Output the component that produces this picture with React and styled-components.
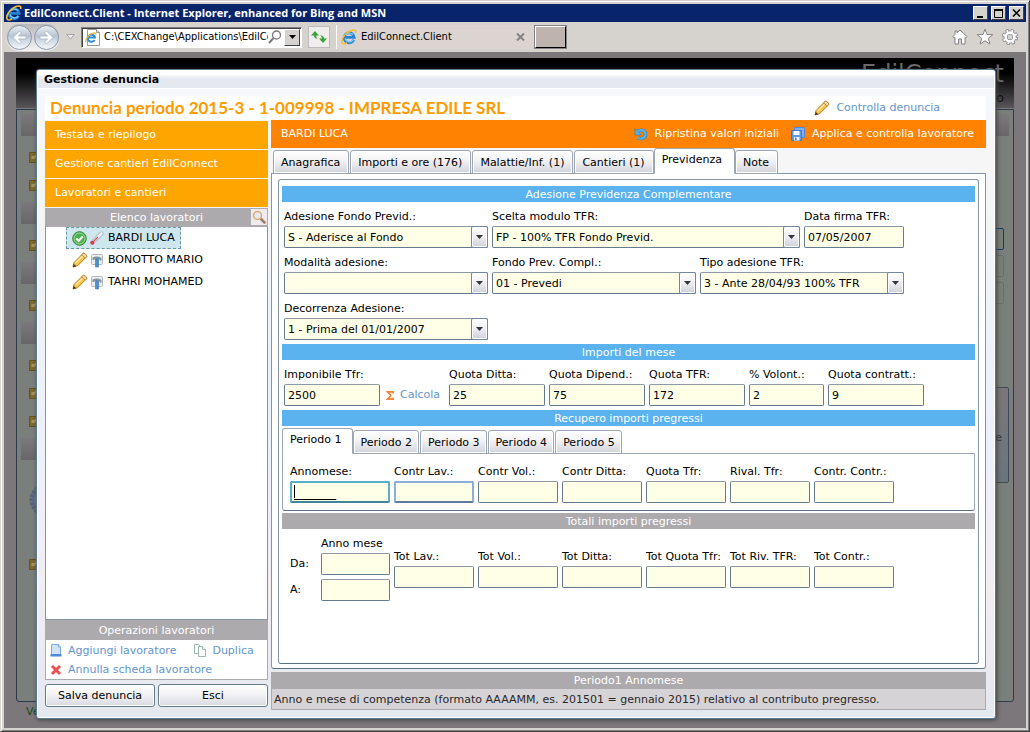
import React, { useState } from 'react';
import styled, { createGlobalStyle, css } from 'styled-components';

const GlobalStyle = createGlobalStyle`
    * {
        box-sizing: border-box;
    }
    body {
        margin: 0;
        font: 11px/16px 'DejaVu Sans', Verdana, sans-serif;
        color: #000;
    }
    button, input, select {
        font: inherit;
        color: inherit;
        margin: 0;
    }
    a {
        color: inherit;
        text-decoration: none;
    }
    svg {
        display: block;
        flex: none;
    }
`;

/* ---------- browser window ---------- */

const Window = styled.div`
    display: flex;
    flex-direction: column;
    min-height: 100vh;
    background: #d6d3ce;
    padding: 3px;
    border: 1px solid #d6d3ce;
    border-right-color: #424142;
    border-bottom-color: #424142;
    box-shadow: inset 1px 1px #fff, inset -1px -1px #848284;
`;

const TitleBar = styled.header`
    display: flex;
    align-items: center;
    gap: 2px;
    height: 18px;
    padding: 0 2px;
    background: #08246b;
    color: #fff;
    font: bold 11px/16px 'Open Sans', Tahoma, sans-serif;
`;

const WindowTitle = styled.span`
    flex: 1;
    white-space: nowrap;
`;

const CaptionButton = styled.button`
    display: grid;
    place-items: center;
    width: 15px;
    height: 14px;
    padding: 0;
    background: #d6d3ce;
    border: 1px solid;
    border-color: #fff #424142 #424142 #fff;
    & + & {
        margin-left: ${({ $apart }) => ($apart ? '1px' : '-1px')};
    }
`;

const NavBar = styled.nav`
    display: flex;
    align-items: center;
    height: 30px;
    padding: 0 7px 0 2px;
    gap: 6px;
    font: 11px/16px 'DejaVu Sans Condensed', Tahoma, sans-serif;
`;

const NavButton = styled.button`
    display: grid;
    place-items: center;
    padding: 0;
    border: 0;
    background: none;
`;

const BackForward = styled.div`
    display: flex;
    gap: 2px;
    padding: 1px;
    border-radius: 14px;
    background: linear-gradient(#b8b8b8, #f4f4f4);
`;

const RoundButton = styled(NavButton)`
    width: 25px;
    height: 25px;
    border-radius: 50%;
    border: 1px solid #8c96a5;
    background: linear-gradient(#e8edf2, #b8c4d2 45%, #ccd6e2 60%, #f4f8fc);
`;

const AddressBox = styled.div`
    display: flex;
    align-items: center;
    width: 221px;
    height: 21px;
    padding: 0 1px 0 3px;
    background: #fff;
    border: 1px solid;
    border-color: #848284 #fff #fff #848284;
    box-shadow: inset 1px 1px #424142;
`;

const AddressInput = styled.input`
    flex: 1;
    min-width: 0;
    padding: 0 0 0 3px;
    border: 0;
    outline: 0;
    background: none;
`;

const DropButton = styled(NavButton)`
    width: 16px;
    height: 17px;
    margin-left: 2px;
    background: #d6d3ce;
    border: 1px solid;
    border-color: #fff #424142 #424142 #fff;
`;

const RefreshButton = styled(NavButton)`
    width: 22px;
    height: 22px;
    border: 1px solid #bdbabd;
    background: #f0eeec;
`;

const BrowserTab = styled.div`
    display: flex;
    align-items: center;
    gap: 4px;
    width: 198px;
    height: 24px;
    padding: 0 9px 0 4px;
    border-left: 1px solid #fff;
    background: #dbd4d1;
    & > span {
        flex: 1;
    }
`;

const NewTab = styled.button`
    width: 31px;
    height: 22px;
    margin-left: -5px;
    background: #bdb4b0;
    border: 1px solid;
    border-color: #fff #000 #000 #fff;
    outline: 1px solid #848284;
`;

const NavIcons = styled.div`
    display: flex;
    gap: 7px;
    margin-left: auto;
`;

/* ---------- dimmed page behind the dialog ---------- */

const Stage = styled.main`
    flex: 1;
    display: grid;
    background: #7b777b;
    & > * {
        grid-area: 1 / 1;
    }
`;

const BackPage = styled.div`
    display: flex;
    flex-direction: column;
    padding: 6px 12px 0;
    color: #101010;
`;

const BackHeader = styled.div`
    height: 50px;
    padding-right: 10px;
    text-align: right;
    background: linear-gradient(#000 30%, #585658);
    font: 24px/32px 'DejaVu Sans', Verdana, sans-serif;
    color: #6b696b;
    & small {
        display: block;
        font-size: 13px;
        line-height: 16px;
        color: #101010;
    }
`;

const BackBody = styled.div`
    flex: 1;
    display: flex;
    justify-content: space-between;
    margin-top: 1px;
    padding: 4px;
    border: 1px solid #2c3b47;
    border-radius: 0 0 3px 3px;
    background: #7b7f7b;
`;

const BackRail = styled.div`
    width: 40px;
`;

const BackBand = styled.div`
    height: 22px;
    background: linear-gradient(#7b797b, #686668);
`;

const BackGroup = styled.div`
    padding: 7px 0 3px 8px;
`;

const BackItem = styled.div`
    display: flex;
    align-items: center;
    height: 28px;
`;

const BackSide = styled.div`
    display: flex;
    flex-direction: column;
    align-items: flex-end;
    width: 40px;
`;

const BackSpace = styled.div`
    height: 92px;
`;

const BackField = styled.div`
    width: 30px;
    height: 22px;
    margin: 0 5px 5px 0;
    border: 1px solid ${({ $focus }) => ($focus ? '#103c6b' : '#6a6d6a')};
    border-radius: 2px;
`;

const BackBox = styled.div`
    width: 30px;
    height: 96px;
    margin-top: 78px;
    padding: 42px 6px 0 0;
    text-align: right;
    color: #30383c;
    border: 1px solid #404c54;
    border-radius: 2px;
    background: linear-gradient(#7b777b, #6a757c);
`;

const BackFooter = styled.div`
    height: 26px;
    padding: 2px 10px;
    color: #184a20;
`;

/* ---------- dialog ---------- */

const Dialog = styled.section`
    display: flex;
    flex-direction: column;
    margin: 17px 30px 9px 32px;
    padding: 0 9px 8px 8px;
    border: 1px solid #5a7b8c;
    border-radius: 3px;
    box-shadow: inset 0 0 0 1px #fff, 1px 1px 4px #404040;
    background: linear-gradient(#f6f8fe, #f6f6f6 12%, #eef2f8 45%, #eef0fa 60%, #f2eef2 80%, #e4e8ef);
`;

const DialogTitle = styled.h1`
    margin: 1px -8px 7px -7px;
    padding: 0 6px;
    height: 18px;
    font-size: 11px;
    line-height: 17px;
    background: linear-gradient(#fff 0 20%, #f2f2f4 30%, #e6e8f0 50%);
    border-bottom: 1px solid #fff;
`;

const DialogHead = styled.div`
    display: flex;
    align-items: center;
    justify-content: space-between;
    height: 24px;
    padding: 0 46px 0 5px;
    background: #fff;
`;

const Heading = styled.h2`
    margin: 0;
    font: bold 17px/24px Lato, 'Century Gothic', sans-serif;
    color: #ff9a00;
`;

const ActionLink = styled.a`
    display: flex;
    align-items: center;
    gap: ${({ $light }) => ($light ? 7 : 6)}px;
    color: ${({ $light }) => ($light ? '#fff' : '#6396ce')};
    white-space: nowrap;
`;

const Columns = styled.div`
    flex: 1;
    display: grid;
    grid-template-columns: 223px minmax(0, 1fr);
    gap: 3px;
`;

const Sidebar = styled.aside`
    display: flex;
    flex-direction: column;
    padding-bottom: 3px;
`;

const MenuLink = styled.a`
    padding: 6px 10px;
    height: 28px;
    background: #ffa500;
    color: #fff;
    margin-top: 1px;
`;

const Bar = styled.h3`
    margin: 0;
    padding-top: 1px;
    height: ${({ $height }) => $height || 16}px;
    line-height: ${({ $height }) => ($height || 16) - 1}px;
    font-size: 11px;
    font-weight: normal;
    text-align: center;
    color: #fff;
    background: ${({ $blue }) => ($blue ? '#5ab2ef' : '#adaaad')};
`;

const ListHead = styled.div`
    display: grid;
    margin-top: 1px;
    & > * {
        grid-area: 1 / 1;
    }
`;

const SearchButton = styled.button`
    display: grid;
    place-items: center;
    justify-self: end;
    align-self: center;
    width: 16px;
    height: 16px;
    margin-right: 1px;
    padding: 0;
    border: 0;
    background: #efebef;
`;

const WorkerList = styled.ul`
    flex: 1;
    margin: 0;
    padding: 0 20px;
    list-style: none;
    background: #fff;
    border: 1px solid #8496a5;
    border-top-color: #adaaad;
`;

const Worker = styled.li`
    display: flex;
    align-items: center;
    gap: 2px;
    width: max-content;
    height: 22px;
    padding: 0 5px;
    border: 1px dashed transparent;
    white-space: nowrap;
    & > span {
        margin-left: 2px;
    }
    ${({ $selected }) =>
        $selected &&
        css`
            background: #cee7ef;
            border-color: #6b96a5;
        `}
`;

const Operations = styled.div`
    display: flex;
    flex-wrap: wrap;
    column-gap: 18px;
    padding: 1px 4px 0;
    background: #fff;
    border: 1px solid #adaaad;
    border-top: 0;
    & > a {
        height: 19px;
    }
`;

const Buttons = styled.div`
    display: grid;
    grid-template-columns: 1fr 1fr;
    gap: 3px;
    margin-top: 4px;
`;

const PushButton = styled.button`
    height: 23px;
    padding: 1px 0 0;
    border: 1px solid #637b8c;
    border-radius: 3px;
    box-shadow: inset 0 0 0 1px #fff;
    background: linear-gradient(#fff, #f4f4f6 40%, #d8dae2);
`;

/* ---------- worker card ---------- */

const Card = styled.div`
    display: flex;
    flex-direction: column;
    min-width: 0;
`;

const WorkerBar = styled.div`
    display: flex;
    align-items: center;
    gap: 12px;
    height: 28px;
    padding: 0 12px 0 10px;
    background: #ff8200;
    color: #fff;
    & > span {
        flex: 1;
    }
`;

const Tabs = styled.div`
    display: flex;
    align-items: flex-end;
    gap: 1px;
    height: 26px;
    margin-top: ${({ $inset }) => ($inset ? 0 : 2)}px;
    padding-left: ${({ $inset }) => $inset || 0}px;
    position: relative;
`;

const Tab = styled.button`
    height: 24px;
    padding: 1px ${({ $wide }) => ($wide ? 8 : 6)}px 0 7px;
    border: 1px solid #9ca6b5;
    border-radius: 3px 3px 0 0;
    box-shadow: inset 0 0 0 1px #fff;
    background: linear-gradient(#fff, #f4f4f6 40%, #d2d4dc);
    white-space: nowrap;
    ${({ $active, $wide }) =>
        $active &&
        css`
            height: 26px;
            margin: 0 -1px;
            padding: 0 ${$wide ? 12 : 10}px 2px 7px;
            border-bottom-color: #fff;
            box-shadow: none;
            background: #fff;
            &:first-child {
                margin-left: 0;
            }
        `}
`;

const TabPanel = styled.div`
    flex: 1;
    margin-top: -1px;
    padding: 5px 6px 4px;
    display: flex;
    border: 1px solid #8496a5;
    border-bottom-color: #5a7184;
    border-radius: 0 0 3px 3px;
    background: #fff;
`;

const FormFrame = styled.form`
    flex: 1;
    min-width: 0;
    padding: 6px 3px;
    border: 1px solid #8496a5;
    border-bottom-color: #5a7184;
    border-radius: 3px;
`;

const FormRow = styled.div`
    display: flex;
    align-items: ${({ $align }) => $align || 'flex-end'};
    gap: 4px;
    padding: ${({ $inset }) => ($inset ? '6px 8px 0' : '6px 2px 0')};
`;

const FormBlock = styled.div`
    padding-bottom: 4px;
`;

const Period = styled.div`
    margin: -1px 0 2px;
    padding: 3px 0 7px;
    border: 1px solid #9ca6b5;
    border-bottom-color: #5a7184;
    border-radius: 0 0 3px 3px;
`;

const PeriodRow = styled(FormRow)`
    padding: 6px 7px 0;
`;

const Field = styled.div`
    display: flex;
    flex-direction: column;
    gap: 1px;
    width: ${({ $width }) => $width}px;
    white-space: nowrap;
    & > label {
        padding-top: 1px;
    }
`;

const boxStyle = css`
    width: 100%;
    height: 22px;
    padding: 1px 3px 0;
    border: 1px solid #637b8c;
    border-top-color: #8c9aa5;
    border-radius: 2px;
    outline: 0;
    background-color: #ffffe7;
`;

const TextBox = styled.input`
    ${boxStyle}
    ${({ $tone }) =>
        $tone &&
        css`
            border: 2px solid ${$tone === 'focus' ? '#5aaec6' : '#8caede'};
            border-bottom-color: ${$tone === 'focus' ? '#42869c' : '#637b9c'};
            padding: 0 2px;
        `}
`;

const MaskBox = styled(TextBox)`
    font-size: 14px;
    line-height: 16px;
    background-image: linear-gradient(#000, #000);
    background-size: 1px 13px;
    background-repeat: no-repeat;
    background-position: 2px 2px;
`;

const SelectBox = styled.div`
    display: grid;
    & > * {
        grid-area: 1 / 1;
    }
`;

const Select = styled.select`
    ${boxStyle}
    appearance: none;
    padding-right: 18px;
`;

const SelectArrow = styled.span`
    display: grid;
    place-items: center;
    justify-self: end;
    width: 17px;
    height: 22px;
    border: 1px solid #73869c;
    border-radius: 2px;
    box-shadow: inset 0 0 0 1px #fff;
    background: linear-gradient(#fff, #f0f0f4 45%, #ced0da);
    pointer-events: none;
`;

const Calc = styled.div`
    display: flex;
    align-items: center;
    width: 61px;
    height: 22px;
    padding-left: 2px;
`;

const Range = styled.div`
    display: grid;
    grid-template-columns: 27px 69px;
    gap: 4px;
    align-items: center;
    width: 100px;
    & > span {
        grid-column: 2;
        padding-top: 1px;
        margin-bottom: -3px;
        white-space: nowrap;
    }
`;

const Help = styled.div`
    margin-top: 3px;
`;

const HelpText = styled.p`
    margin: 0;
    height: 21px;
    padding: 1px 2px;
    line-height: 19px;
    color: #292829;
    background: #d6d3d6;
    border: 1px solid #adaaad;
    border-top: 0;
    white-space: nowrap;
    overflow: hidden;
`;

/* ---------- icons ---------- */

const IeIcon = ({ size = 16 }) => (
    <svg width={size} height={size} viewBox="0 0 16 16" fill="none">
        <path d="M12.8 10.800A5 5 0 1 1 13.200 8.300H4.500" stroke="#2483d6" strokeWidth="2.800" />
        <path d="M12.200 11A4.700 4.700 0 0 1 4 9.500M4.500 6A5 5 0 0 1 12 5.500" stroke="#7cccf8" strokeWidth="1.300" />
        <path d="M1.500 14.500C-1 11 4 4 10 1.600c3.500-1.300 5.500-.4 4.600 2.400M1.500 14.500c1 .9 3 .3 4.500-.8" stroke="#f9be30" strokeWidth="1.600" />
    </svg>
);

const PageIeIcon = () => (
    <svg width="16" height="17" viewBox="0 0 16 17">
        <path d="M2.500.5h9l3 3v13h-12z" fill="#fff" stroke="#9a9a9a" />
        <path d="M11.500.5v3h3" fill="#ddd" stroke="#9a9a9a" />
        <path d="M9.600 11A3.600 3.600 0 1 1 10 8.600H3.600" fill="none" stroke="#2a8fe0" strokeWidth="2" />
        <path d="M1 13.400C-.4 11 3 6.400 7.600 4.400c2-.9 3.800-.6 3 1.200" fill="none" stroke="#f2b32c" strokeWidth="1.200" />
    </svg>
);

const ArrowIcon = ({ flip }) => (
    <svg width="17" height="17" viewBox="0 0 17 17">
        <path
            d={flip ? 'M8.500 2l6.500 6.500L8.500 15l-2-2 3-3H2V7h7.500l-3-3z' : 'M8.500 2L2 8.500 8.500 15l2-2-3-3H15V7H7.500l3-3z'}
            fill="#fff"
            stroke="#a4b0c0"
            strokeWidth=".8"
            strokeLinejoin="round"
        />
    </svg>
);

const Triangle = ({ width = 7, fill = '#313439' }) => (
    <svg width={width} height="4" viewBox="0 0 7 4">
        <path d="M0 0h7L3.500 4z" fill={fill} />
    </svg>
);

const HistoryIcon = () => (
    <svg width="9" height="6" viewBox="0 0 9 6">
        <path d="M.8.500h7.400L4.500 5.200z" fill="#eee" stroke="#a5a2a5" />
    </svg>
);

const LensIcon = () => (
    <svg width="14" height="14" viewBox="0 0 14 14" fill="none">
        <circle cx="8.500" cy="5" r="4" stroke="#7b797b" strokeWidth="1.300" />
        <path d="M5.500 8L1 13" stroke="#7b797b" strokeWidth="2" />
    </svg>
);

const RefreshIcon = () => (
    <svg width="16" height="16" viewBox="0 0 16 16" fill="#39a239">
        <path d="M0 6.500L4 2l4 4.500H5.200c0 1.800.6 2.500 1.800 3.300C4.500 9.800 3 8.500 2.800 6.500z" />
        <path d="M16 9.500L12 14 8 9.500h2.800c0-1.800-.6-2.500-1.800-3.300 2.500 0 4 1.300 4.200 3.300z" />
    </svg>
);

const HomeIcon = () => (
    <svg width="18" height="18" viewBox="0 0 18 18">
        <path d="M9 2l7 6.500-1.200 1.500L14 9.500V16h-3.500v-5h-3v5H4V9.500L3.200 10 2 8.500 4 6.500V3h2v1.700z" fill="#fff" stroke="#848284" strokeLinejoin="round" />
    </svg>
);

const StarIcon = () => (
    <svg width="18" height="18" viewBox="0 0 18 18">
        <path d="M9 1.200l2 5.300 5.800.2-4.500 3.600 1.600 5.700L9 12.800 4.100 16l1.600-5.700L1.200 6.700 7 6.500z" fill="#fff" stroke="#848284" strokeLinejoin="round" />
    </svg>
);

const GearIcon = () => (
    <svg width="18" height="18" viewBox="0 0 18 18" fill="none">
        <circle cx="9" cy="9" r="6.300" stroke="#848284" strokeWidth="3.600" strokeDasharray="2.900 2.050" />
        <circle cx="9" cy="9" r="4.500" stroke="#848284" strokeWidth="4" />
        <circle cx="9" cy="9" r="6.300" stroke="#fff" strokeWidth="2.200" strokeDasharray="1.700 3.250" strokeDashoffset="-.6" />
        <circle cx="9" cy="9" r="4.400" stroke="#fff" strokeWidth="2.600" />
        <circle cx="9" cy="9" r="2" fill="#d6d3ce" />
    </svg>
);

const CloseIcon = () => (
    <svg width="9" height="8" viewBox="0 0 9 8" stroke="#848284" strokeWidth="2">
        <path d="M1 .5l7 7M8 .5l-7 7" />
    </svg>
);

const PencilIcon = ({ size = 16 }) => (
    <svg width={size} height={size} viewBox="0 0 16 16" strokeLinejoin="round">
        <path d="M1 15l1-4.500L11 1.500c1-1 4.500 2 3.500 3.300L5.500 13.800z" fill="#f7c34a" stroke="#b5791c" />
        <path d="M3.500 11L12 2.800" stroke="#ffeaa0" strokeWidth="1.600" />
        <path d="M11 1.500c1-1 4.500 2 3.500 3.300l-1.300 1.400-3.600-3.300z" fill="#f5d9b4" stroke="#b5791c" strokeWidth=".8" />
        <path d="M1 15l.7-3 2.500 2.300z" fill="#3a2a18" />
    </svg>
);

const UndoIcon = () => (
    <svg width="14" height="14" viewBox="0 0 14 14">
        <path d="M3.500 4.500C6 2.200 11.500 2.800 11.500 7.500c0 3.500-4 5-7.500 3.500" fill="none" stroke="#2f7cb4" strokeWidth="3.400" />
        <path d="M3.500 4.500C6 2.200 11.500 2.800 11.500 7.500c0 3.500-4 5-7.500 3.500" fill="none" stroke="#5ab4ee" strokeWidth="2.200" />
        <path d="M1 1.500V8h6.500z" fill="#5ab4ee" stroke="#2f7cb4" strokeWidth=".7" />
    </svg>
);

const SaveIcon = () => (
    <svg width="14" height="14" viewBox="0 0 14 14">
        <path d="M3.500.5h10v10h-3v-7h-7z" fill="#7cb0f4" stroke="#5586d4" />
        <path d="M.5 3.500h10v10H.5z" fill="#5c98ec" stroke="#4478cc" />
        <path d="M2.500 4h6v4h-6z" fill="#fff" />
        <path d="M3 10h5.500v3.500H3z" fill="#eef4fc" />
        <path d="M4 10.500h1.500V13H4z" fill="#4478cc" />
    </svg>
);

const SearchIcon = () => (
    <svg width="14" height="14" viewBox="0 0 14 14">
        <path d="M9 9l3.500 3.500" stroke="#a08068" strokeWidth="2.600" strokeLinecap="round" />
        <circle cx="5.500" cy="5.500" r="4" fill="#e6e9f4" stroke="#dbab70" strokeWidth="1.500" />
    </svg>
);

const CheckIcon = () => (
    <svg width="15" height="15" viewBox="0 0 15 15">
        <circle cx="7.500" cy="7.500" r="6.800" fill="#4caf50" stroke="#2c8636" />
        <circle cx="7.500" cy="7.500" r="5.500" fill="none" stroke="#a8dca8" />
        <path d="M4.300 7.500l2.400 2.500 4-4.500" fill="none" stroke="#fff" strokeWidth="2" />
    </svg>
);

const ThermometerIcon = () => (
    <svg width="15" height="15" viewBox="0 0 15 15" strokeLinecap="round">
        <path d="M3.500 11.500L12.500 2.500" stroke="#9eaab8" strokeWidth="4" />
        <path d="M3.500 11.500L12.500 2.500" stroke="#f0f4f8" strokeWidth="2.600" />
        <path d="M3.500 11.500L8.500 6.500" stroke="#e0485c" strokeWidth="1.300" />
        <circle cx="3.300" cy="11.700" r="2" fill="#dc3c50" />
    </svg>
);

const HammerIcon = () => (
    <svg width="14" height="15" viewBox="0 0 14 15">
        <rect x="1.500" y="1.500" width="11" height="10" rx="1" fill="#eceef0" stroke="#b4b8bc" />
        <path d="M2.500 4.500C5 3 9 3 11.500 5v2.500H10L9 6H5L4 7H2.500z" fill="#8494a4" />
        <path d="M5.500 6h3v8h-3z" fill="#4a90d4" stroke="#3a74b4" strokeWidth=".6" />
    </svg>
);

const NewPageIcon = () => (
    <svg width="12" height="13" viewBox="0 0 12 13">
        <path d="M1.500.5h7L10.500 3v8.500h-9z" fill="#cfe3fa" stroke="#7aa8e0" />
        <path d="M8.500.5V3h2" fill="#fff" stroke="#7aa8e0" />
        <path d="M.5 10h11v2.500H.5z" fill="#4a8ad8" />
    </svg>
);

const CopyIcon = () => (
    <svg width="12" height="13" viewBox="0 0 12 13" fill="#fff" stroke="#9cb8ae">
        <path d="M.5.500h4L6.500 2.500v7h-6z" />
        <path d="M4.500 2.500h4L11.500 5.500v7h-7z" />
        <path d="M8.500 2.500v3h3" />
    </svg>
);

const DeleteIcon = () => (
    <svg width="12" height="12" viewBox="0 0 12 12" stroke="#ee5050" strokeWidth="3">
        <path d="M2 2l8 8M10 2l-8 8" />
    </svg>
);

const SigmaIcon = () => (
    <svg width="8" height="9" viewBox="0 0 8 9" fill="none" stroke="#f58232" strokeWidth="1.600">
        <path d="M7.200 2.500V.9H1.500L4.800 4.500 1.500 8.100h5.700V6.500" />
    </svg>
);

const FolderIcon = () => (
    <svg width="12" height="11" viewBox="0 0 12 11">
        <path d="M.5.500h11v10H.5z" fill="#7c6a30" stroke="#6c4e1c" />
        <path d="M2.500 4h3l1.500-1.500h5V5h-5L5.500 7h-3z" fill="#a59358" />
    </svg>
);

const GlobeIcon = () => (
    <svg width="34" height="34" viewBox="0 0 34 34">
        <circle cx="17" cy="17" r="14.500" fill="#66708a" stroke="#56627c" strokeWidth="4" strokeDasharray="3 1" />
        <circle cx="17" cy="17" r="10" fill="#66708a" />
    </svg>
);

/* ---------- data ---------- */

const workers = [
    { name: 'BARDI LUCA', icons: [CheckIcon, ThermometerIcon] },
    { name: 'BONOTTO MARIO', icons: [PencilIcon, HammerIcon] },
    { name: 'TAHRI MOHAMED', icons: [PencilIcon, HammerIcon] },
];

const cardTabs = ['Anagrafica', 'Importi e ore (176)', 'Malattie/Inf. (1)', 'Cantieri (1)', 'Previdenza', 'Note'];
const periods = ['Periodo 1', 'Periodo 2', 'Periodo 3', 'Periodo 4', 'Periodo 5'];

const periodFields = ['Contr Vol.:', 'Contr Ditta:', 'Quota Tfr:', 'Rival. Tfr:', 'Contr. Contr.:'];
const totalFields = ['Tot Lav.:', 'Tot Vol.:', 'Tot Ditta:', 'Tot Quota Tfr:', 'Tot Riv. TFR:', 'Tot Contr.:'];

const TextField = ({ id, label, width, value = '', tone }) => (
    <Field $width={width}>
        <label htmlFor={id}>{label}</label>
        <TextBox id={id} defaultValue={value} $tone={tone} />
    </Field>
);

const SelectField = ({ id, label, width, value = '' }) => (
    <Field $width={width}>
        <label htmlFor={id}>{label}</label>
        <SelectBox>
            <Select id={id} defaultValue={value}>
                <option value={value}>{value}</option>
            </Select>
            <SelectArrow>
                <Triangle />
            </SelectArrow>
        </SelectBox>
    </Field>
);

function BackgroundPage() {
    return (
        <BackPage aria-hidden="true">
            <BackHeader>
                EdilConnect
                <small>o</small>
            </BackHeader>
            <BackBody>
                <BackRail>
                    {[2, 1, 1, 3].map((count, i) => (
                        <React.Fragment key={i}>
                            <BackBand />
                            <BackGroup>
                                {Array.from({ length: count }, (_, n) => (
                                    <BackItem key={n}>
                                        <FolderIcon />
                                    </BackItem>
                                ))}
                            </BackGroup>
                        </React.Fragment>
                    ))}
                    <BackBand />
                    <BackGroup>
                        <BackSpace>
                            <br />
                            <GlobeIcon />
                        </BackSpace>
                        <FolderIcon />
                    </BackGroup>
                </BackRail>
                <BackSide>
                    <BackBand as={BackRail} />
                    <BackSpace />
                    <BackField $focus />
                    <BackField />
                    <BackField />
                    <BackBox>e</BackBox>
                </BackSide>
            </BackBody>
            <BackFooter>Ve</BackFooter>
        </BackPage>
    );
}

export default function App() {
    const [tab, setTab] = useState('Previdenza');
    const [period, setPeriod] = useState('Periodo 1');

    return (
        <Window>
            <GlobalStyle />
            <TitleBar>
                <IeIcon />
                <WindowTitle>EdilConnect.Client - Internet Explorer, enhanced for Bing and MSN</WindowTitle>
                <CaptionButton aria-label="Minimize">
                    <svg width="9" height="9">
                        <path d="M1 7h6v2H1z" />
                    </svg>
                </CaptionButton>
                <CaptionButton aria-label="Maximize">
                    <svg width="9" height="9">
                        <path d="M.5 1h8v7.500h-8z" fill="none" stroke="#000" />
                        <path d="M0 0h9v2H0z" />
                    </svg>
                </CaptionButton>
                <CaptionButton aria-label="Close" $apart>
                    <svg width="9" height="8" stroke="#000" strokeWidth="1.500">
                        <path d="M1 .5l7 7M8 .5l-7 7" />
                    </svg>
                </CaptionButton>
            </TitleBar>
            <NavBar>
                <BackForward>
                    <RoundButton aria-label="Back">
                        <ArrowIcon />
                    </RoundButton>
                    <RoundButton aria-label="Forward">
                        <ArrowIcon flip />
                    </RoundButton>
                </BackForward>
                <NavButton aria-label="History">
                    <HistoryIcon />
                </NavButton>
                <AddressBox>
                    <PageIeIcon />
                    <AddressInput aria-label="Address" defaultValue="C:\CEXChange\Applications\EdilConnect" />
                    <LensIcon />
                    <DropButton aria-label="Show addresses">
                        <Triangle fill="#000" />
                    </DropButton>
                </AddressBox>
                <RefreshButton aria-label="Refresh">
                    <RefreshIcon />
                </RefreshButton>
                <BrowserTab>
                    <IeIcon />
                    <span>EdilConnect.Client</span>
                    <NavButton aria-label="Close tab">
                        <CloseIcon />
                    </NavButton>
                </BrowserTab>
                <NewTab aria-label="New tab" />
                <NavIcons>
                    <NavButton aria-label="Home">
                        <HomeIcon />
                    </NavButton>
                    <NavButton aria-label="Favorites">
                        <StarIcon />
                    </NavButton>
                    <NavButton aria-label="Tools">
                        <GearIcon />
                    </NavButton>
                </NavIcons>
            </NavBar>
            <Stage>
                <BackgroundPage />
                <Dialog role="dialog" aria-labelledby="dialog-title">
                    <DialogTitle id="dialog-title">Gestione denuncia</DialogTitle>
                    <DialogHead>
                        <Heading>Denuncia periodo 2015-3 - 1-009998 - IMPRESA EDILE SRL</Heading>
                        <ActionLink href="#controlla">
                            <PencilIcon />
                            Controlla denuncia
                        </ActionLink>
                    </DialogHead>
                    <Columns>
                        <Sidebar>
                            <MenuLink href="#testata">Testata e riepilogo</MenuLink>
                            <MenuLink href="#cantieri">Gestione cantieri EdilConnect</MenuLink>
                            <MenuLink href="#lavoratori">Lavoratori e cantieri</MenuLink>
                            <ListHead>
                                <Bar $height={18}>Elenco lavoratori</Bar>
                                <SearchButton aria-label="Cerca">
                                    <SearchIcon />
                                </SearchButton>
                            </ListHead>
                            <WorkerList>
                                {workers.map(({ name, icons }, i) => (
                                    <Worker key={name} $selected={i === 0}>
                                        {icons.map((Icon, n) => (
                                            <Icon key={n} />
                                        ))}
                                        <span>{name}</span>
                                    </Worker>
                                ))}
                            </WorkerList>
                            <Bar $height={20}>Operazioni lavoratori</Bar>
                            <Operations>
                                <ActionLink href="#aggiungi">
                                    <NewPageIcon />
                                    Aggiungi lavoratore
                                </ActionLink>
                                <ActionLink href="#duplica">
                                    <CopyIcon />
                                    Duplica
                                </ActionLink>
                                <ActionLink href="#annulla">
                                    <DeleteIcon />
                                    Annulla scheda lavoratore
                                </ActionLink>
                            </Operations>
                            <Buttons>
                                <PushButton>Salva denuncia</PushButton>
                                <PushButton>Esci</PushButton>
                            </Buttons>
                        </Sidebar>
                        <Card>
                            <WorkerBar>
                                <span>BARDI LUCA</span>
                                <ActionLink href="#ripristina" $light>
                                    <UndoIcon />
                                    Ripristina valori iniziali
                                </ActionLink>
                                <ActionLink href="#applica" $light>
                                    <SaveIcon />
                                    Applica e controlla lavoratore
                                </ActionLink>
                            </WorkerBar>
                            <Tabs role="tablist" $inset={2}>
                                {cardTabs.map((name) => (
                                    <Tab
                                        key={name}
                                        role="tab"
                                        aria-selected={tab === name}
                                        $active={tab === name}
                                        $wide
                                        onClick={() => setTab(name)}
                                    >
                                        {name}
                                    </Tab>
                                ))}
                            </Tabs>
                            <TabPanel>
                                <FormFrame onSubmit={(e) => e.preventDefault()}>
                                    <Bar $blue>Adesione Previdenza Complementare</Bar>
                                    <FormBlock>
                                        <FormRow>
                                            <SelectField id="adesione" label="Adesione Fondo Previd.:" width={204} value="S - Aderisce al Fondo" />
                                            <SelectField id="modulo" label="Scelta modulo TFR:" width={308} value="FP - 100% TFR Fondo Previd." />
                                            <TextField id="firma" label="Data firma TFR:" width={100} value="07/05/2007" />
                                        </FormRow>
                                        <FormRow>
                                            <SelectField id="modalita" label="Modalità adesione:" width={204} />
                                            <SelectField id="fondo" label="Fondo Prev. Compl.:" width={204} value="01 - Prevedi" />
                                            <SelectField id="tipo" label="Tipo adesione TFR:" width={204} value="3 - Ante 28/04/93 100% TFR" />
                                        </FormRow>
                                        <FormRow>
                                            <SelectField id="decorrenza" label="Decorrenza Adesione:" width={204} value="1 - Prima del 01/01/2007" />
                                        </FormRow>
                                    </FormBlock>
                                    <Bar $blue>Importi del mese</Bar>
                                    <FormBlock>
                                        <FormRow>
                                            <TextField id="imponibile" label="Imponibile Tfr:" width={96} value="2500" />
                                            <Calc>
                                                <ActionLink href="#calcola">
                                                    <SigmaIcon />
                                                    Calcola
                                                </ActionLink>
                                            </Calc>
                                            <TextField id="ditta" label="Quota Ditta:" width={96} value="25" />
                                            <TextField id="dipend" label="Quota Dipend.:" width={96} value="75" />
                                            <TextField id="tfr" label="Quota TFR:" width={96} value="172" />
                                            <TextField id="volont" label="% Volont.:" width={75} value="2" />
                                            <TextField id="contratt" label="Quota contratt.:" width={96} value="9" />
                                        </FormRow>
                                    </FormBlock>
                                    <Bar $blue>Recupero importi pregressi</Bar>
                                    <Tabs role="tablist">
                                        {periods.map((name) => (
                                            <Tab
                                                key={name}
                                                type="button"
                                                role="tab"
                                                aria-selected={period === name}
                                                $active={period === name}
                                                onClick={() => setPeriod(name)}
                                            >
                                                {name}
                                            </Tab>
                                        ))}
                                    </Tabs>
                                    <Period>
                                        <PeriodRow>
                                            <Field $width={100}>
                                                <label htmlFor="annomese">Annomese:</label>
                                                <MaskBox id="annomese" defaultValue="______" $tone="focus" />
                                            </Field>
                                            <TextField id="lav" label="Contr Lav.:" width={80} tone="hover" />
                                            {periodFields.map((label) => (
                                                <TextField key={label} id={label} label={label} width={80} />
                                            ))}
                                        </PeriodRow>
                                    </Period>
                                    <Bar>Totali importi pregressi</Bar>
                                    <FormRow $inset $align="center">
                                        <Range>
                                            <span>Anno mese</span>
                                            <label htmlFor="da">Da:</label>
                                            <TextBox id="da" />
                                            <label htmlFor="a">A:</label>
                                            <TextBox id="a" />
                                        </Range>
                                        {totalFields.map((label) => (
                                            <TextField key={label} id={label} label={label} width={80} />
                                        ))}
                                    </FormRow>
                                </FormFrame>
                            </TabPanel>
                            <Help>
                                <Bar $height={17}>Periodo1 Annomese</Bar>
                                <HelpText>
                                    Anno e mese di competenza (formato AAAAMM, es. 201501 = gennaio 2015) relativo al contributo pregresso.
                                </HelpText>
                            </Help>
                        </Card>
                    </Columns>
                </Dialog>
            </Stage>
        </Window>
    );
}
